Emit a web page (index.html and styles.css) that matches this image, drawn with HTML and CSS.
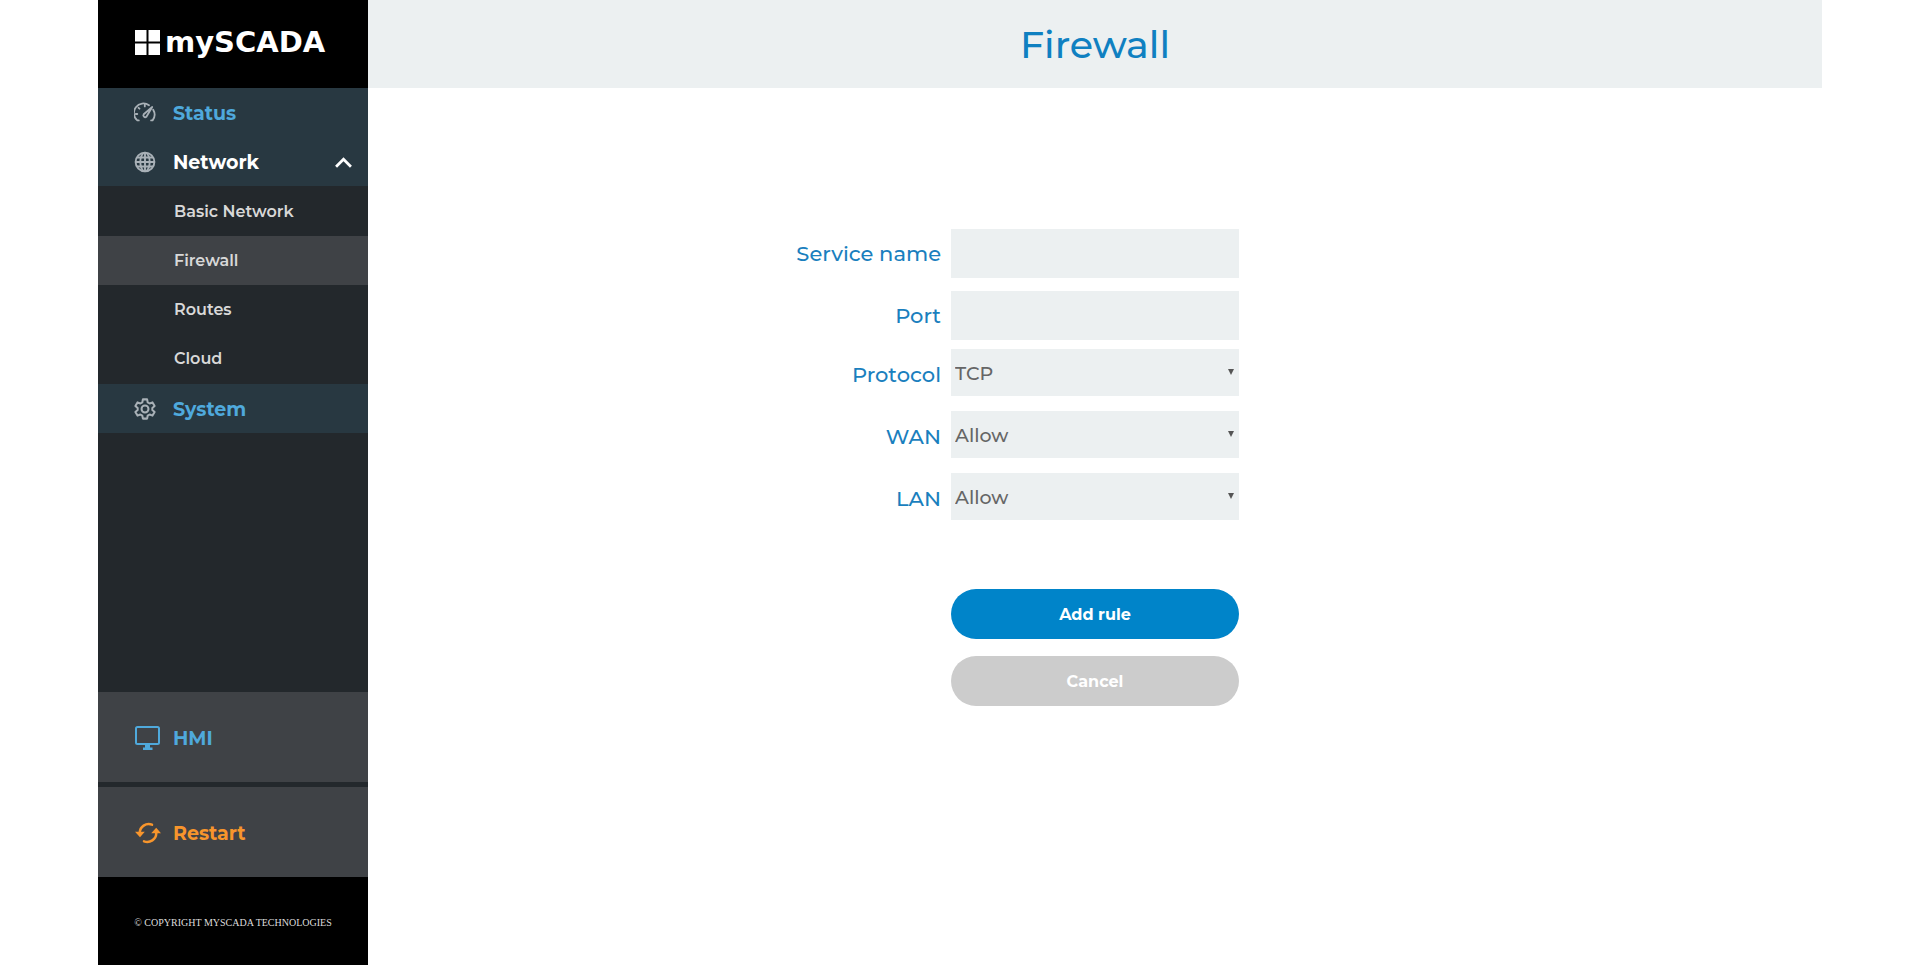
FILE: index.html
```
<!DOCTYPE html>
<html lang="en">
<head>
    <meta charset="UTF-8">
    <meta name="viewport" content="width=device-width, initial-scale=1.0">
    <title>Firewall - mySCADA</title>
    <link rel="stylesheet" href="styles.css">
</head>
<body>
    <div class="page">
        <aside class="sidebar">
            <a class="logo" href="#">
                <svg class="logo-mark" viewBox="0 0 25 25" aria-hidden="true">
                    <path fill="#fff" d="M0 0h11.500v11.500H0zM13.500 0H25v11.500H13.500zM0 13.500h11.500V25H0zM13.500 13.500H25V25H13.500z"/>
                </svg>
                <span class="logo-text">mySCADA</span>
            </a>

            <nav class="menu">
                <a class="menu-item" href="#">
                    <svg class="icon" viewBox="0 0 22 22" aria-hidden="true">
                        <g fill="none" stroke="#a9b1b7" stroke-width="1.800" stroke-linecap="round" stroke-linejoin="round">
                            <path d="M4.800 18.400H3.300A9.600 9.600 0 0 1 15 3.200M19.200 7.800a9.600 9.600 0 0 1-.6 10.600h-1.500"/>
                            <path d="M10.800 2.600v1.800M4.500 5.800l1 .9M1.800 12h1.500"/>
                            <path d="M18.200 5L9.700 12.200a1.900 1.900 0 0 0 2.700 2.600z"/>
                        </g>
                    </svg>
                    Status
                </a>
                <a class="menu-item open" href="#">
                    <svg class="icon" viewBox="0 0 22 22" aria-hidden="true">
                        <g fill="none" stroke="#a9b1b7" stroke-width="1.900">
                            <circle cx="11" cy="11" r="9.400"/>
                            <ellipse cx="11" cy="11" rx="4.700" ry="9.400"/>
                            <path d="M11 1.600v18.800M1.600 11h18.800M3 6.500h16M3 15.500h16"/>
                        </g>
                    </svg>
                    Network
                    <svg class="chevron" viewBox="0 0 16 10" aria-hidden="true">
                        <path fill="none" stroke="#fff" stroke-width="2.600" d="M1 9l7-7 7 7"/>
                    </svg>
                </a>
                <div class="submenu">
                    <a class="submenu-item" href="#">Basic Network</a>
                    <a class="submenu-item active" href="#">Firewall</a>
                    <a class="submenu-item" href="#">Routes</a>
                    <a class="submenu-item" href="#">Cloud</a>
                </div>
                <a class="menu-item" href="#">
                    <svg class="icon" viewBox="0 0 24 24" aria-hidden="true">
                        <g fill="none" stroke="#a9b1b7" stroke-width="2.200" stroke-linejoin="round">
                            <path d="M9.700 1.500h4.600l.6 3.200 2.200 1.300 3.100-1.200 2.300 4-2.500 2.100v2.200l2.500 2.100-2.300 4-3.100-1.200-2.200 1.300-.6 3.200H9.700l-.6-3.200L6.900 18l-3.100 1.200-2.300-4L4 13.100v-2.200L1.500 8.800l2.300-4L6.900 6l2.200-1.300z"/>
                            <circle cx="12" cy="12" r="3.800"/>
                        </g>
                    </svg>
                    System
                </a>
            </nav>

            <div class="actions">
                <a class="action hmi" href="#">
                    <svg class="action-icon" viewBox="0 0 26 24" aria-hidden="true">
                        <rect x="1" y="1" width="23" height="17" rx="1.500" fill="none" stroke="currentColor" stroke-width="2"/>
                        <path fill="currentColor" d="M10 18.500h5v3h2.500V24h-9.500v-2.500h2z"/>
                    </svg>
                    HMI
                </a>
                <a class="action restart" href="#">
                    <svg class="action-icon" viewBox="0 0 26 24" aria-hidden="true">
                        <path fill="none" stroke="currentColor" stroke-width="2.500" stroke-linecap="round" d="M17 3.700A9 9 0 0 0 4.700 12M9 20.300A9 9 0 0 0 21.300 12"/>
                        <path fill="currentColor" d="M0 10.800h9.800L5 16.200zM16.200 12.200H26L21.200 6.800z"/>
                    </svg>
                    Restart
                </a>
            </div>

            <footer class="copyright">© COPYRIGHT MYSCADA TECHNOLOGIES</footer>
        </aside>

        <main class="content">
            <header class="title-bar">
                <h1>Firewall</h1>
            </header>

            <form class="rule-form">
                <div class="fields">
                    <div class="field">
                        <label for="service">Service name</label>
                        <input id="service" type="text">
                    </div>
                    <div class="field">
                        <label for="port">Port</label>
                        <input id="port" type="text">
                    </div>
                </div>
                <div class="fields selects">
                    <div class="field">
                        <label for="protocol">Protocol</label>
                        <div class="select">
                            <select id="protocol">
                                <option>TCP</option>
                                <option>UDP</option>
                            </select>
                        </div>
                    </div>
                    <div class="field">
                        <label for="wan">WAN</label>
                        <div class="select">
                            <select id="wan">
                                <option>Allow</option>
                                <option>Deny</option>
                            </select>
                        </div>
                    </div>
                    <div class="field">
                        <label for="lan">LAN</label>
                        <div class="select">
                            <select id="lan">
                                <option>Allow</option>
                                <option>Deny</option>
                            </select>
                        </div>
                    </div>
                </div>
                <div class="buttons">
                    <button class="btn btn-primary" type="submit">Add rule</button>
                    <button class="btn btn-cancel" type="button">Cancel</button>
                </div>
            </form>
        </main>
    </div>
</body>
</html>
```

FILE: styles.css
```
* {
    box-sizing: border-box;
}
body {
    margin: 0;
    background-color: #fff;
    font-family: Montserrat, Inter, sans-serif;
}
a {
    text-decoration: none;
}
.page {
    display: flex;
    min-height: 100vh;
    padding: 0 92px 0 98px;
}

/* Sidebar */
.sidebar {
    display: flex;
    flex-direction: column;
    flex: 0 0 270px;
    background-color: #23282c;
}
.logo {
    display: flex;
    align-items: center;
    gap: 5px;
    height: 88px;
    padding: 0 0 4px 37px;
    background-color: #000;
}
.logo-mark {
    width: 25px;
    height: 25px;
}
.logo-text {
    color: #fff;
    font-family: "DejaVu Sans", sans-serif;
    font-size: 29px;
    font-weight: bold;
    line-height: 32px;
}
.menu-item {
    display: flex;
    align-items: center;
    gap: 17px;
    height: 49px;
    padding: 1px 16px 0 36px;
    background-color: #283841;
    color: #4fa9dc;
    font-size: 19px;
    font-weight: 700;
}
.menu-item.open {
    color: #fff;
}
.icon {
    width: 22px;
    height: 22px;
}
.chevron {
    width: 17px;
    height: 11px;
    margin-left: auto;
}
.submenu {
    padding: 1px 0;
}
.submenu-item {
    display: flex;
    align-items: center;
    height: 49px;
    padding-left: 76px;
    color: #d8d8d8;
    font-size: 16px;
    font-weight: 600;
}
.submenu-item.active {
    background-color: #3f4246;
}
.actions {
    display: flex;
    flex-direction: column;
    gap: 5px;
    margin-top: auto;
}
.action {
    display: flex;
    align-items: center;
    gap: 12px;
    height: 90px;
    padding: 2px 0 0 37px;
    background-color: #3f4246;
    font-size: 19px;
    font-weight: 700;
}
.action-icon {
    width: 26px;
    height: 24px;
}
.hmi {
    color: #4fa9dc;
}
.restart {
    color: #f7952c;
}
.copyright {
    height: 88px;
    background-color: #000;
    color: #ddd;
    font-family: "Liberation Serif", serif;
    font-size: 10px;
    line-height: 92px;
    text-align: center;
}

/* Content */
.content {
    flex: 1;
}
.title-bar {
    display: flex;
    align-items: center;
    justify-content: center;
    height: 88px;
    background-color: #ecf0f1;
}
h1 {
    margin: 0;
    color: #0f80c1;
    font-size: 38px;
    font-weight: 500;
}
.rule-form {
    padding: 141px 0 40px;
}
.fields {
    display: grid;
    gap: 13px;
}
.selects {
    gap: 15px;
    margin-top: 9px;
}
.field {
    display: grid;
    grid-template-columns: 1fr 288px 1fr;
    column-gap: 10px;
    align-items: center;
}
label {
    color: #1a7fbe;
    font-size: 21px;
    font-weight: 500;
    text-align: right;
}
.selects label {
    padding-top: 4px;
}
input,
select {
    width: 100%;
    height: 49px;
    border: 0;
    border-radius: 0;
    padding: 0 4px;
    background-color: #ecf0f1;
    color: #666;
    font-family: inherit;
    font-size: 19px;
    font-weight: 500;
}
select {
    display: block;
    height: 47px;
    padding-top: 2px;
    appearance: none;
}
.select {
    position: relative;
}
.select::after {
    content: "";
    position: absolute;
    top: 20px;
    right: 5px;
    border: 3px solid transparent;
    border-top: 6px solid #555;
    border-bottom: 0;
    pointer-events: none;
}
.buttons {
    display: grid;
    gap: 17px;
    width: 288px;
    margin: 69px auto 0;
}
.btn {
    height: 50px;
    border: 0;
    border-radius: 25px;
    color: #fff;
    font-family: inherit;
    font-size: 16px;
    font-weight: 700;
    cursor: pointer;
}
.btn-primary {
    background-color: #0084c9;
}
.btn-cancel {
    background-color: #ccc;
}
```
